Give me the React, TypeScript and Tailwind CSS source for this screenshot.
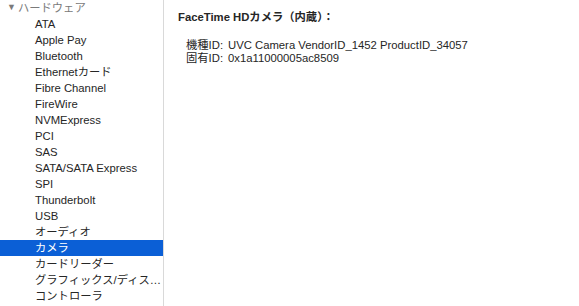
import React from "react";

const items = [
  "ATA",
  "Apple Pay",
  "Bluetooth",
  "Ethernetカード",
  "Fibre Channel",
  "FireWire",
  "NVMExpress",
  "PCI",
  "SAS",
  "SATA/SATA Express",
  "SPI",
  "Thunderbolt",
  "USB",
  "オーディオ",
  "カメラ",
  "カードリーダー",
  "グラフィックス/ディス…",
  "コントローラ",
];

const font = {
  fontFamily: '"Liberation Sans", "Noto Sans CJK JP", sans-serif',
};

export default function App() {
  return (
    <div
      className="flex w-[579px] h-[306px] overflow-hidden bg-white text-[11.3px] text-[#262626]"
      style={font}
    >
      <div className="w-[164px] shrink-0 border-r border-[#d9d9d9] flex flex-col">
        <div className="h-[16px] flex items-center pl-[7px] text-[#7a7a7a]">
          <span className="text-[9px] mr-[2px]">▼</span>
          <span>ハードウェア</span>
        </div>
        {items.map((it) => (
          <div
            key={it}
            className={
              "h-[16px] flex items-center pl-[35px] whitespace-nowrap " +
              (it === "カメラ" ? "bg-[#0b5fd6] text-white" : "")
            }
          >
            {it}
          </div>
        ))}
      </div>
      <div className="flex-1 pl-[14px] pt-[10px]">
        <div className="font-bold h-[14px] leading-[14px]">FaceTime HDカメラ（内蔵）：</div>
        <div className="mt-[15px] pl-[8px] flex flex-col leading-[13px]">
          <div className="flex">
            <span className="w-[42px]">機種ID:</span>
            <span>UVC Camera VendorID_1452 ProductID_34057</span>
          </div>
          <div className="flex">
            <span className="w-[42px]">固有ID:</span>
            <span>0x1a11000005ac8509</span>
          </div>
        </div>
      </div>
    </div>
  );
}
